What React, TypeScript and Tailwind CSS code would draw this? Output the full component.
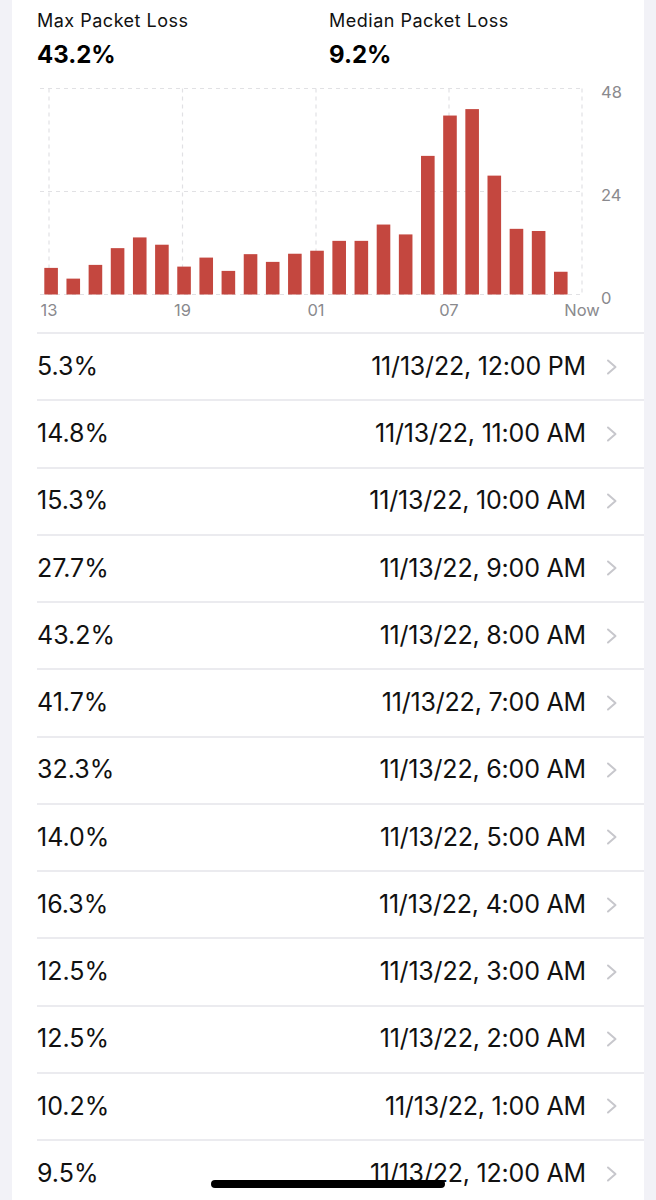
import React from "react";

const bars = [
  6.2, 3.7, 6.9, 10.8, 13.3, 11.6, 6.5, 8.6, 5.5, 9.4, 7.6, 9.5, 10.2, 12.5,
  12.5, 16.3, 14.0, 32.3, 41.7, 43.2, 27.7, 15.3, 14.8, 5.3,
];

const rows = [
  ["5.3%", "11/13/22, 12:00 PM"],
  ["14.8%", "11/13/22, 11:00 AM"],
  ["15.3%", "11/13/22, 10:00 AM"],
  ["27.7%", "11/13/22, 9:00 AM"],
  ["43.2%", "11/13/22, 8:00 AM"],
  ["41.7%", "11/13/22, 7:00 AM"],
  ["32.3%", "11/13/22, 6:00 AM"],
  ["14.0%", "11/13/22, 5:00 AM"],
  ["16.3%", "11/13/22, 4:00 AM"],
  ["12.5%", "11/13/22, 3:00 AM"],
  ["12.5%", "11/13/22, 2:00 AM"],
  ["10.2%", "11/13/22, 1:00 AM"],
  ["9.5%", "11/13/22, 12:00 AM"],
];

// chart coordinates are page x - 12, page y - 69
const OX = 12;
const OY = 69;
const yFor = (v: number) => 294.5 - (v * 206) / 48 - OY;

const xTicks = [
  { x: 49, label: "13" },
  { x: 182.5, label: "19" },
  { x: 316, label: "01" },
  { x: 449, label: "07" },
  { x: 582, label: "Now" },
];

const yTicks = [
  { v: 48, label: "48" },
  { v: 24, label: "24" },
  { v: 0, label: "0" },
];

function Chart() {
  return (
    <svg width="632" height="263" className="block">
      {yTicks.map((t) => (
        <line
          key={t.label}
          x1={40 - OX}
          x2={582 - OX}
          y1={yFor(t.v)}
          y2={yFor(t.v)}
          stroke="#e1e1e4"
          strokeWidth="1.2"
          strokeDasharray="4 4"
        />
      ))}
      {xTicks.map((t) => (
        <line
          key={t.label}
          x1={t.x - OX}
          x2={t.x - OX}
          y1={yFor(48)}
          y2={yFor(0)}
          stroke="#e1e1e4"
          strokeWidth="1.2"
          strokeDasharray="4 4"
        />
      ))}
      {bars.map((v, i) => {
        const x = 44.3 + i * 22.16 - OX;
        const h = (v * 206) / 48;
        return (
          <rect key={i} x={x} y={yFor(0) - h} width={13.6} height={h} fill="#c4473f" />
        );
      })}
      {xTicks.map((t) => (
        <text
          key={t.label}
          x={t.x - OX}
          y={316 - OY}
          textAnchor="middle"
          fill="#8a8a8e"
          fontSize="16.5"
          fontFamily="Inter, sans-serif"
        >
          {t.label}
        </text>
      ))}
      {yTicks.map((t) => (
        <text
          key={t.label}
          x={601 - OX}
          y={yFor(t.v) + 9}
          fill="#8a8a8e"
          fontSize="16.5"
          fontFamily="Inter, sans-serif"
        >
          {t.label}
        </text>
      ))}
    </svg>
  );
}

function Chevron() {
  return (
    <svg width="12" height="16" viewBox="0 0 12 16" className="shrink-0">
      <path
        d="M2 1.5 L9.5 8 L2 14.5"
        fill="none"
        stroke="#c7c7cc"
        strokeWidth="2"
        strokeLinecap="round"
        strokeLinejoin="round"
      />
    </svg>
  );
}

export default function App() {
  return (
    <div
      className="relative w-[656px] h-[1200px] overflow-hidden bg-[#f2f2f7] px-[12px]"
      style={{ fontFamily: "Inter, 'Noto Sans', sans-serif" }}
    >
      <div className="bg-white h-full">
        {/* Summary */}
        <div className="flex pt-[10px] pl-[25px]">
          <div className="w-[292px]">
            <div className="text-[18px] leading-[22px] tracking-[0.5px] text-[#111]">Max Packet Loss</div>
            <div className="mt-[8px] text-[24px] leading-[29px] font-bold text-black">43.2%</div>
          </div>
          <div>
            <div className="text-[18px] leading-[22px] tracking-[0.5px] text-[#111]">Median Packet Loss</div>
            <div className="mt-[8px] text-[24px] leading-[29px] font-bold text-black">9.2%</div>
          </div>
        </div>

        <Chart />

        {/* Hourly list */}
        <div className="pl-[25px]">
          {rows.map(([pct, date], i) => (
            <div
              key={i}
              className="h-[67.25px] border-t-2 border-[#ebebef] flex items-center pr-[26px] text-[25px] text-[#111]"
            >
              <span className="flex-1">{pct}</span>
              <span className="tracking-[-0.2px]">{date}</span>
              <span className="ml-[20px] flex">
                <Chevron />
              </span>
            </div>
          ))}
        </div>
      </div>

      {/* Home indicator */}
      <div className="absolute left-[211px] top-[1180px] w-[234px] h-[8px] rounded-full bg-black" />
    </div>
  );
}
